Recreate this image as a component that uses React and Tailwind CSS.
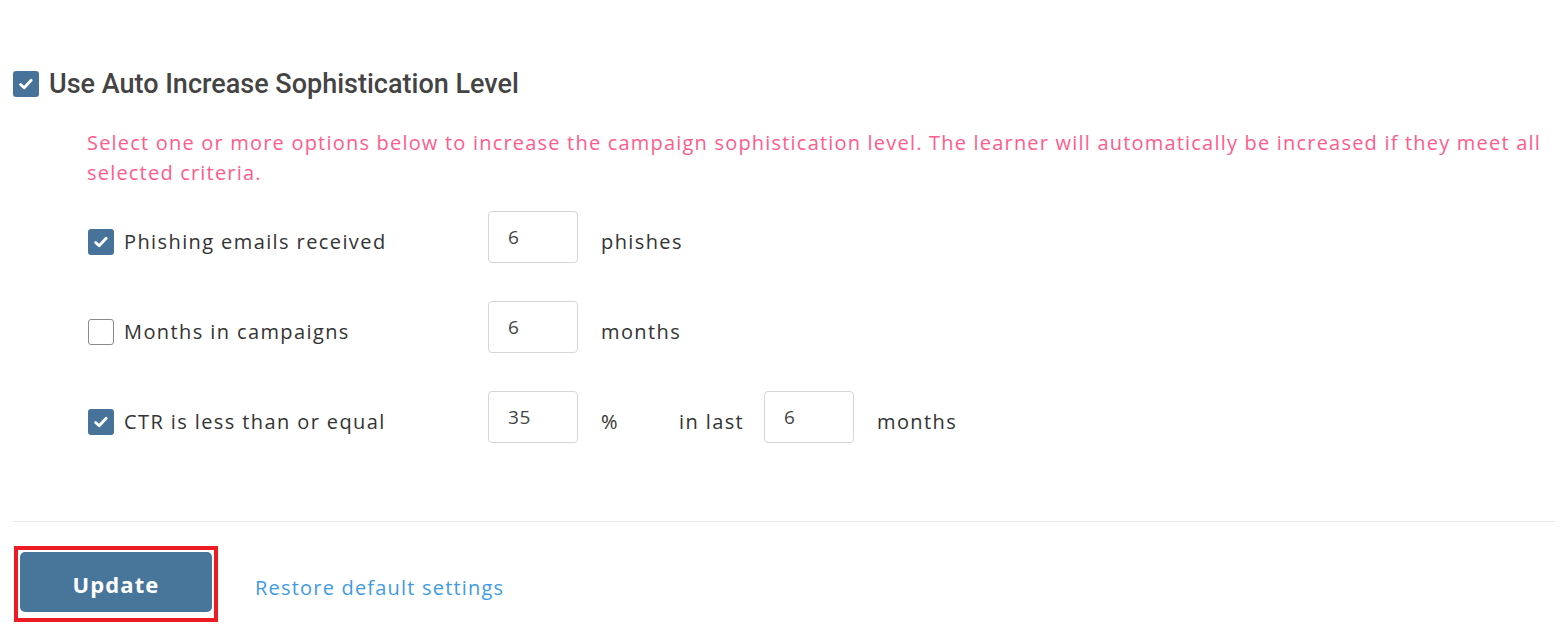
import { useState } from "react";

function CheckBox({ checked, onChange }) {

    return (

        <button
            type="button"
            onClick={onChange}
            className={
                checked
                    ? "w-[26px] h-[26px] rounded-[3px] bg-[#47739a] flex items-center justify-center shrink-0"
                    : "w-[26px] h-[26px] rounded-[3px] bg-white border border-[#8a8a8a] flex items-center justify-center shrink-0"
            }
        >

            {checked && (
                <svg width="18" height="18" viewBox="0 0 18 18" fill="none">
                    <path d="M3.6 9.4 L7.2 12.8 L14.2 5.2" stroke="white" strokeWidth="2.8" strokeLinecap="round" strokeLinejoin="round" />
                </svg>
            )}

        </button>

    );

}

function NumberBox({ value }) {

    return (

        <div className="w-[90px] h-[52px] shrink-0 border border-[#d6d6d6] rounded-[4px] bg-white pl-[19px] pt-[12px] text-[19px] leading-[26px] tracking-[0.04em] text-[#444]">

            {value}

        </div>

    );

}

export default function App() {

    const [useAuto, setUseAuto] = useState(true);

    const [form, setForm] = useState({

        phishes: true,
        months: false,
        ctr: true

    });

    const toggle = (name) => {

        setForm({ ...form, [name]: !form[name] });

    };

    const body = { fontFamily: '"Open Sans", "Liberation Sans", sans-serif' };

    return (

        <div className="w-[1567px] h-[639px] bg-white px-[13px] pt-[71px] text-[#333]" style={body}>

            <div className="flex items-center gap-[10px]">

                <CheckBox checked={useAuto} onChange={() => setUseAuto(!useAuto)} />

                <h2
                    className="text-[27px] leading-[26px] font-medium text-[#444]"
                    style={{ fontFamily: "Roboto, sans-serif" }}
                >

                    Use Auto Increase Sophistication Level

                </h2>

            </div>

            <p className="mt-[31px] ml-[74px] w-[1470px] text-[20px] leading-[30px] tracking-[0.06em] text-[#ff5c8d]">

                Select one or more options below to increase the campaign sophistication level. The learner will automatically be increased if they meet all selected criteria.

            </p>

            <div className="ml-[75px] mt-[23px] flex flex-col gap-[38px] text-[20px] tracking-[0.07em]">

                <div className="flex items-center">

                    <div className="w-[400px] mt-[9px] flex items-center gap-[10px]">

                        <CheckBox checked={form.phishes} onChange={() => toggle("phishes")} />

                        <span>Phishing emails received</span>

                    </div>

                    <NumberBox value="6" />

                    <span className="ml-[23px] mt-[9px]">phishes</span>

                </div>

                <div className="flex items-center">

                    <div className="w-[400px] mt-[9px] flex items-center gap-[10px]">

                        <CheckBox checked={form.months} onChange={() => toggle("months")} />

                        <span>Months in campaigns</span>

                    </div>

                    <NumberBox value="6" />

                    <span className="ml-[23px] mt-[9px]">months</span>

                </div>

                <div className="flex items-center">

                    <div className="w-[400px] mt-[9px] flex items-center gap-[10px]">

                        <CheckBox checked={form.ctr} onChange={() => toggle("ctr")} />

                        <span>CTR is less than or equal</span>

                    </div>

                    <NumberBox value="35" />

                    <span className="ml-[23px] mt-[9px] w-[78px]">%</span>

                    <span className="mt-[9px] w-[85px]">in last</span>

                    <NumberBox value="6" />

                    <span className="ml-[23px] mt-[9px]">months</span>

                </div>

            </div>

            <div className="mt-[78px] w-[1542px] border-t border-[#e8e8e8]" />

            <div className="mt-[24px] flex items-center">

                <div className="ml-px w-[204px] h-[76px] border-4 border-[#ed1c24] p-[2px]">

                    <button
                        type="button"
                        className="w-[192px] h-[60px] pt-[4px] rounded-[5px] bg-[#48759a] text-white text-[22px] font-bold tracking-[0.05em]"
                    >

                        Update

                    </button>

                </div>

                <a href="#" className="ml-[37px] mt-[8px] text-[20px] tracking-[0.06em] text-[#3f9be3]">

                    Restore default settings

                </a>

            </div>

        </div>

    );

}
